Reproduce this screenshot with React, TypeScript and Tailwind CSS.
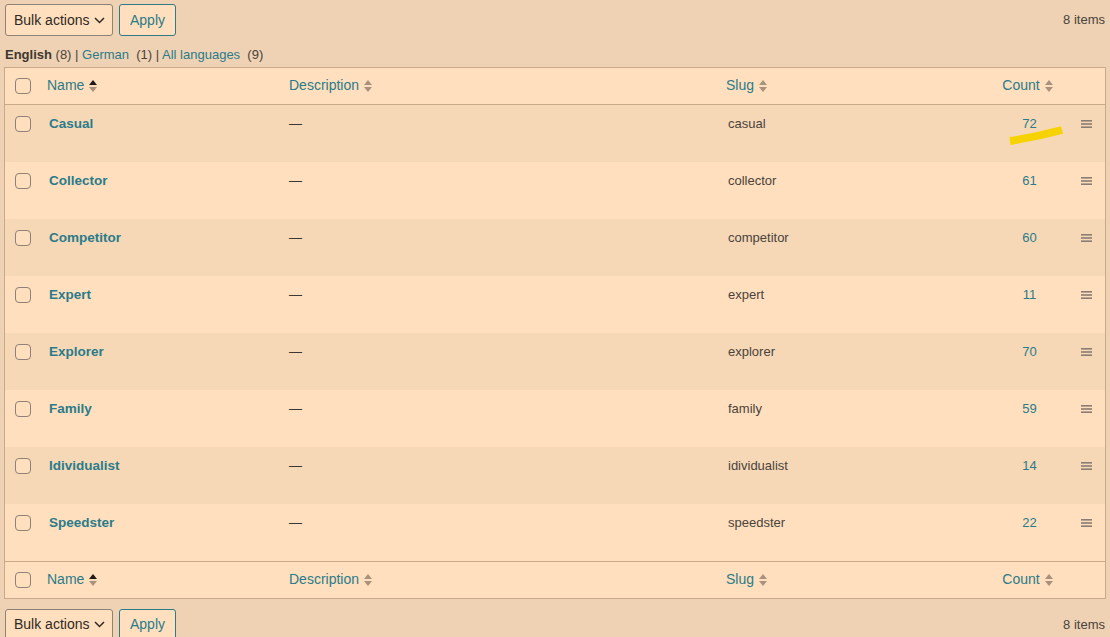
import React from 'react';

const ROWS = [
  { name: 'Casual', slug: 'casual', count: 72 },
  { name: 'Collector', slug: 'collector', count: 61 },
  { name: 'Competitor', slug: 'competitor', count: 60 },
  { name: 'Expert', slug: 'expert', count: 11 },
  { name: 'Explorer', slug: 'explorer', count: 70 },
  { name: 'Family', slug: 'family', count: 59 },
  { name: 'Idividualist', slug: 'idividualist', count: 14 },
  { name: 'Speedster', slug: 'speedster', count: 22 },
];

const GRID = 'grid grid-cols-[34px_242px_437px_274px_72px_1fr]';

function SortArrows({ active }: { active?: boolean }) {
  return (
    <svg width="10" height="16" viewBox="0 0 10 16" className="ml-1 inline-block">
      <path d="M1 7 L5 2 L9 7 Z" fill={active ? '#1d1a17' : '#a8927e'} />
      <path d="M1 9 L5 14 L9 9 Z" fill="#a8927e" />
    </svg>
  );
}

function Checkbox() {
  return <span className="block h-4 w-4 rounded-[4px] border border-[#8e8177] bg-[#ffdfbd]" />;
}

function Handle() {
  return (
    <svg width="11" height="8" viewBox="0 0 11 8">
      <rect x="0" y="0" width="11" height="1.6" fill="#8a7d72" />
      <rect x="0" y="3.2" width="11" height="1.6" fill="#8a7d72" />
      <rect x="0" y="6.4" width="11" height="1.6" fill="#8a7d72" />
    </svg>
  );
}

function HeaderRow({ top }: { top?: boolean }) {
  return (
    <div
      className={`${GRID} h-[37px] items-center text-[14px] text-[#2b7b8a] ${
        top ? 'border-b' : 'border-t'
      } border-[#c9a98a]`}
    >
      <div className="flex justify-center pl-[2px]">
        <Checkbox />
      </div>
      <div className="flex items-center pl-[8px]">
        Name
        <SortArrows active />
      </div>
      <div className="flex items-center pl-[8px]">
        Description
        <SortArrows />
      </div>
      <div className="flex items-center pl-[8px]">
        Slug
        <SortArrows />
      </div>
      <div className="flex items-center justify-center">
        Count
        <SortArrows />
      </div>
      <div />
    </div>
  );
}

function Toolbar() {
  return (
    <div className="flex items-center justify-between pl-[5px] pr-[5px]">
      <div className="flex items-center gap-[6px]">
        <div className="flex h-[32px] w-[108px] items-center justify-between rounded-[3px] border border-[#8e8177] bg-[#ffdfbd] pl-[8px] pr-[7px] text-[14px] text-[#2f2a25]">
          <span>Bulk actions</span>
          <svg width="11" height="7" viewBox="0 0 11 7">
            <path d="M1 1 L5.5 5.5 L10 1" stroke="#2f2a25" strokeWidth="1.5" fill="none" />
          </svg>
        </div>
        <div className="flex h-[32px] items-center rounded-[3px] border border-[#2b7b8a] bg-[#ffdfbd] px-[10px] text-[14px] text-[#2b7b8a]">
          Apply
        </div>
      </div>
      <span className="text-[13px] text-[#4a433c]">8 items</span>
    </div>
  );
}

export default function App() {
  return (
    <div
      className="relative h-[637px] w-[1110px] overflow-hidden bg-[#efd2b3] pt-[4px]"
      style={{ fontFamily: '"Liberation Sans", Arial, sans-serif' }}
    >
      <Toolbar />

      <div className="mt-[9px] pl-[5px] text-[13px] text-[#4a433c]">
        <span className="font-semibold text-[#3d3731]">English</span> (8) |{' '}
        <span className="text-[#2b7b8a]">German</span>&nbsp; (1) |{' '}
        <span className="text-[#2b7b8a]">All languages</span>&nbsp; (9)
      </div>

      <div className="mx-[4px] mt-[2px] w-[1102px] border border-[#c9a98a] bg-[#ffdfbd]">
        <HeaderRow top />
        {ROWS.map((row, i) => (
          <div
            key={row.slug}
            className={`${GRID} h-[57px] items-start pt-[9px] ${
              i % 2 === 0 ? 'bg-[#f6d8b7]' : 'bg-[#ffdfbd]'
            }`}
          >
            <div className="flex justify-center pl-[2px] pt-[2px]">
              <Checkbox />
            </div>
            <div className="pl-[10px] text-[13.5px] font-bold text-[#2b7b8a]">{row.name}</div>
            <div className="pl-[8px] text-[13px] text-[#3d3731]">—</div>
            <div className="pl-[10px] text-[13px] text-[#4a433c]">{row.slug}</div>
            <div className="pl-[3px] text-center text-[13px] text-[#2b7b8a]">{row.count}</div>
            <div className="flex justify-center pt-[6px] pl-[4px]">
              <Handle />
            </div>
          </div>
        ))}
        <HeaderRow />
      </div>

      <div className="mt-[10px]">
        <Toolbar />
      </div>

      <svg
        className="absolute left-[1008px] top-[122px]"
        width="58"
        height="26"
        viewBox="0 0 58 26"
      >
        <path d="M2 19 Q28 15 54 8" stroke="#f6d300" strokeWidth="8" fill="none" strokeLinecap="butt" />
      </svg>
    </div>
  );
}
